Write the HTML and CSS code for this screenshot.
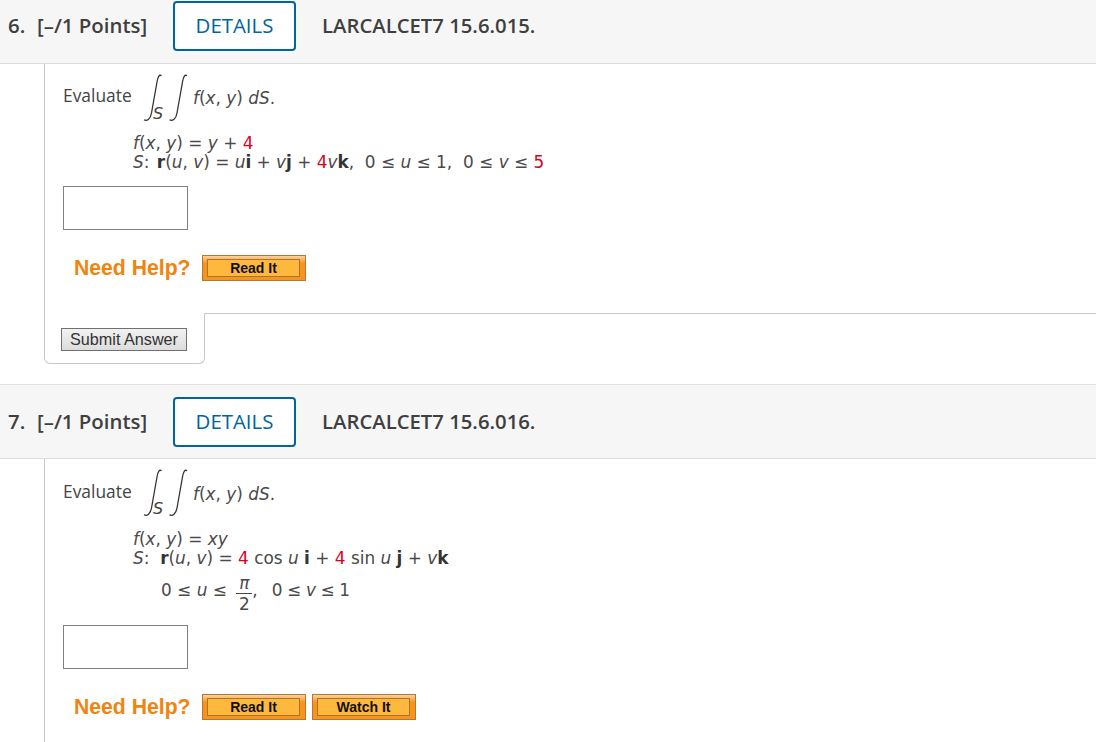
FILE: index.html
```html
<!DOCTYPE html>
<html lang="en">
<head>
<meta charset="utf-8">
<title>Questions</title>
<link rel="stylesheet" href="styles.css">
</head>
<body>
<section class="question q1">
  <header class="band band-first">
    <span class="num">6.</span><span class="pts">[–/1 Points]</span>
    <button class="details">DETAILS</button>
    <span class="code">LARCALCET7 15.6.015.</span>
  </header>
  <div class="content">
    <div class="evaluate">
      <span class="ev-word">Evaluate</span>
      <svg class="integrals" width="46" height="48" viewBox="0 0 46 48"><g fill="none" stroke="#333" stroke-width="1.3"><path d="M18.5 1.8C16.5 .3 15 2 14 8L8.5 39C7.5 45 4 47.5 1 45.8"/><path d="M44 1.8C42 .3 40.5 2 39.5 8L34 39C33 45 29.5 47.5 26.5 45.8"/></g><text class="sub" x="10" y="45">S</text></svg>
      <span class="math"><i>f</i>(<i>x</i>, <i>y</i>) <i>dS</i>.</span>
    </div>
    <div class="math-block mb1">
      <div class="math"><i>f</i>(<i>x</i>, <i>y</i>) = <i>y</i> + <span class="red">4</span></div>
      <div class="math"><i>S</i>: <b class="r">r</b>(<i>u</i>, <i>v</i>) = <i>u</i><b>i</b> + <i>v</i><b>j</b> + <span class="red">4</span><i>v</i><b>k</b>,&nbsp; 0 ≤ <i>u</i> ≤ 1,&nbsp; 0 ≤ <i>v</i> ≤ <span class="red">5</span></div>
    </div>
    <input class="answer answer1" type="text" aria-label="Answer">
    <div class="help help1">
      <span class="need">Need Help?</span>
      <a class="hbtn"><span>Read It</span></a>
    </div>
  </div>
  <div class="submit-row">
    <div class="submit-box"><button class="submit">Submit Answer</button></div>
    <div class="submit-rest"></div>
  </div>
</section>
<section class="question q2">
  <header class="band">
    <span class="num">7.</span><span class="pts">[–/1 Points]</span>
    <button class="details">DETAILS</button>
    <span class="code">LARCALCET7 15.6.016.</span>
  </header>
  <div class="content">
    <div class="evaluate">
      <span class="ev-word">Evaluate</span>
      <svg class="integrals" width="46" height="48" viewBox="0 0 46 48"><g fill="none" stroke="#333" stroke-width="1.3"><path d="M18.5 1.8C16.5 .3 15 2 14 8L8.5 39C7.5 45 4 47.5 1 45.8"/><path d="M44 1.8C42 .3 40.5 2 39.5 8L34 39C33 45 29.5 47.5 26.5 45.8"/></g><text class="sub" x="10" y="45">S</text></svg>
      <span class="math"><i>f</i>(<i>x</i>, <i>y</i>) <i>dS</i>.</span>
    </div>
    <div class="math-block mb2">
      <div class="math"><i>f</i>(<i>x</i>, <i>y</i>) = <i>xy</i></div>
      <div class="math"><i>S</i>:&nbsp; <b>r</b>(<i>u</i>, <i>v</i>) = <span class="red">4</span> cos <i>u</i> <b>i</b> + <span class="red">4</span> sin <i>u</i> <b>j</b> + <i>v</i><b>k</b></div>
      <div class="math range">
        <span>0 ≤ <i>u</i> ≤&nbsp;</span>
        <span class="frac"><i class="top">π</i><span class="bot">2</span></span>
        <span class="after">,&nbsp;&nbsp; 0 ≤ <i>v</i> ≤ 1</span>
      </div>
    </div>
    <input class="answer answer2" type="text" aria-label="Answer">
    <div class="help help2">
      <span class="need">Need Help?</span>
      <a class="hbtn"><span>Read It</span></a>
      <a class="hbtn"><span>Watch It</span></a>
    </div>
  </div>
</section>
</body>
</html>
```
FILE: styles.css
```css
html, body { margin: 0; padding: 0; background: #fff; }
body { height: 742px; overflow: hidden; font-family: "Open Sans", sans-serif; color: #3c3c3c; }
.band {
  display: flex; align-items: center; box-sizing: border-box; height: 75px;
  background: #f6f6f6; border-top: 1px solid #e2e2e2; border-bottom: 1px solid #dcdcdc;
  padding-left: 8px;
}
.band-first { height: 64px; border-top: 0; padding-top: 0; align-items: flex-start; }
.num, .pts { font-weight: 600; font-size: 20.4px; line-height: 24px; color: #3f3f3f; margin-bottom: 2px; }
.code { font-weight: 600; font-size: 20.3px; line-height: 24px; color: #3f3f3f; margin: 0 0 2px 26px; }
.band-first .num, .band-first .pts, .band-first .code { margin-top: 13px; }
.num { width: 29px; }
.pts { width: 136px; }
.details {
  box-sizing: border-box; width: 123px; height: 50px; margin: 0; padding: 0 0 2px;
  background: #fff; border: 2px solid #00659c; border-radius: 4px;
  color: #00659c; font: 400 20.4px "Open Sans", sans-serif;
}
.band-first .details { margin-top: 1px; }
.content { margin-left: 44px; border-left: 1px solid #c8c8c8; padding-left: 18px; }
.evaluate { display: flex; align-items: flex-start; height: 59px; }
.ev-word { font-size: 17.4px; line-height: 22px; margin-top: 21px; width: 80px; color: #444; }
.q1 .ev-word { margin-top: 20px; }
.integrals { margin-top: 10px; }
.sub { font: italic 16px "DejaVu Sans", sans-serif; fill: #444; }
.evaluate .math { margin-left: 4px; margin-top: 26px; }
.q1 .evaluate .math { margin-top: 25px; }
.math { font: 16.9px/18.5px "DejaVu Sans", sans-serif; color: #4a4a4a; white-space: nowrap; }
.math b { color: #333; }
.math .r { margin-left: 2px; }
.red { color: #d8001c; }
.math-block { margin-left: 70px; }
.mb1 { margin-top: 11px; }
.mb2 { margin-top: 12px; }
.range { display: flex; align-items: center; margin-top: 7px; padding-left: 28px; height: 32px; }
.frac { display: inline-flex; flex-direction: column; align-items: center; width: 16px; margin: 8px 0 0 4px; }
.frac .top { border-bottom: 1px solid #444; line-height: 19px; width: 100%; text-align: center; box-sizing: content-box; }
.frac .bot { line-height: 20px; }
.after { word-spacing: -0.7px; }
.answer {
  display: block; box-sizing: border-box; width: 125px; height: 44px; margin: 0;
  padding: 0; border: 1px solid #808080; background: #fff;
}
.answer1 { margin-top: 15px; }
.answer2 { margin-top: 19px; }
.help { display: flex; align-items: center; padding-left: 11px; height: 26px; }
.help1 { margin-top: 25px; padding-bottom: 32px; }
.help2 { margin-top: 25px; padding-bottom: 40px; }
.need { font: 700 21.2px/26px "Liberation Sans", sans-serif; color: #f08410; width: 128px; }
.hbtn {
  display: flex; box-sizing: border-box; width: 104px; height: 26px; margin-right: 6px; padding: 3px 5px 3px 4px;
  background: linear-gradient(#fbd3a0, #f7941e 30%, #f7941e); border: 1px solid #b8762f;
}
.hbtn span {
  flex: 1; text-align: center; background: #ffb83e; border: 1px solid #a9762c; padding-top: 1px;
  font: 700 14px/15px "Liberation Sans", sans-serif; color: #111;
}
.submit-row { display: flex; height: 51px; }
.submit-box {
  box-sizing: border-box; width: 161px; margin-left: 44px; padding: 15px 0 0 16px;
  border: 1px solid #c8c8c8; border-top: 0; border-radius: 0 0 6px 6px;
}
.submit {
  display: block; box-sizing: border-box; width: 126px; height: 23px; padding: 0; margin: 0;
  background: linear-gradient(#f2f2f2, #dcdcdc); border: 1px solid #707070;
  font: 16.2px "Liberation Sans", sans-serif; color: #333;
}
.submit-rest { flex: 1; border-top: 1px solid #c8c8c8; }
.q2 { margin-top: 20px; }
```
